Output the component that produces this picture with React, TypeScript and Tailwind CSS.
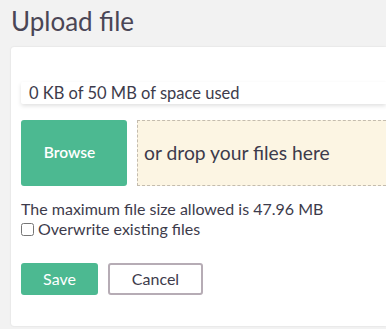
export default function App() {
  return (
    <div className="h-[329px] w-[386px] overflow-hidden bg-[#f2f2f2] font-['Lato',sans-serif] text-[#3d3b4b]">
      <h1 className="pl-[11px] pt-[3px] text-[26px] leading-[36px] text-[#4a4656]">Upload file</h1>
      <div className="ml-[11px] mt-[8px] h-[279px] rounded-tl-[3px] rounded-bl-[3px] bg-white pl-[10px] pt-[35px] shadow-[0_0_2px_rgba(0,0,0,0.12)]">
        <div className="flex h-[22px] items-center rounded-l-[2px] bg-white pl-[8px] text-[16.5px] shadow-[0_2px_4px_rgba(0,0,0,0.12)]">
          0 KB of 50 MB of space used
        </div>
        <div className="mt-[16px] flex h-[66px] gap-[10px]">
          <button className="w-[106px] shrink-0 rounded-[3px] bg-[#4cb991] pr-[9px] text-[15.5px] font-semibold text-white">
            Browse
          </button>
          <div className="flex flex-1 items-center border border-r-0 border-dashed border-[#c4bcae] bg-[#fcf5e3] pl-[6px] text-[19.3px]">
            or drop your files here
          </div>
        </div>
        <p className="mt-[13px] text-[16px] leading-[20px]">The maximum file size allowed is 47.96 MB</p>
        <label className="flex items-center gap-[4px] text-[16px] leading-[20px]">
          <input type="checkbox" className="m-0 h-[13px] w-[13px] accent-[#888]" />
          Overwrite existing files
        </label>
        <div className="mt-[24px] flex gap-[10px]">
          <button className="h-[32px] w-[77px] rounded-[3px] bg-[#4cb991] text-[16px] text-white">Save</button>
          <button className="h-[32px] w-[95px] rounded-[3px] border-2 border-[#b6acb5] bg-white text-[16px]">
            Cancel
          </button>
        </div>
      </div>
    </div>
  );
}
